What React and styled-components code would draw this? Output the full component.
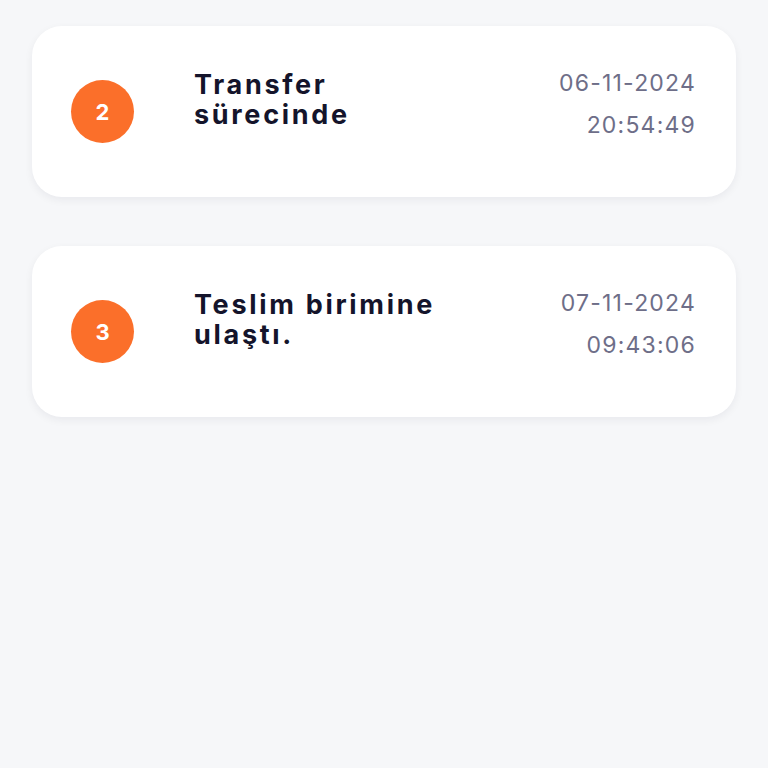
import React from 'react';
import styled, { createGlobalStyle } from 'styled-components';

const GlobalStyle = createGlobalStyle`
  html, body {
    margin: 0;
    padding: 0;
    background: #f6f7f9;
    font-family: "Inter", "Noto Sans", sans-serif;
  }
`;

const Page = styled.div`
  min-height: 768px;
  padding: 26px 32px;
  display: flex;
  flex-direction: column;
  gap: 49px;
  box-sizing: border-box;
`;

const Card = styled.div`
  background: #ffffff;
  border-radius: 30px;
  height: 171px;
  box-sizing: border-box;
  padding: 42px 40px 0 39px;
  display: flex;
  align-items: flex-start;
  box-shadow: 0 3px 8px rgba(20, 20, 50, 0.06);
`;

const Badge = styled.div`
  width: 63px;
  height: 63px;
  margin-top: 12px;
  border-radius: 50%;
  background: #fb6f2a;
  color: #ffffff;
  display: flex;
  align-items: center;
  justify-content: center;
  font-size: 22px;
  font-weight: 700;
  flex-shrink: 0;
`;

const Title = styled.div`
  margin: 2px 0 0 60px;
  font-size: 27px;
  line-height: 30px;
  font-weight: 700;
  letter-spacing: 2.7px;
  color: #14142b;
`;

const Stamp = styled.div`
  margin-left: auto;
  display: flex;
  flex-direction: column;
  align-items: flex-end;
  gap: 12px;
  color: #6e6e88;
  font-size: 23px;
  line-height: 30px;
  font-weight: 400;
  letter-spacing: 1.2px;
`;

const steps = [
  { n: 2, title: ['Transfer', 'sürecinde'], date: '06-11-2024', time: '20:54:49' },
  { n: 3, title: ['Teslim birimine', 'ulaştı.'], date: '07-11-2024', time: '09:43:06' },
];

export default function App() {
  return (
    <>
      <GlobalStyle />
      <Page>
        {steps.map((s) => (
          <Card key={s.n}>
            <Badge>{s.n}</Badge>
            <Title>
              {s.title[0]}
              <br />
              {s.title[1]}
            </Title>
            <Stamp>
              <span>{s.date}</span>
              <span>{s.time}</span>
            </Stamp>
          </Card>
        ))}
      </Page>
    </>
  );
}
